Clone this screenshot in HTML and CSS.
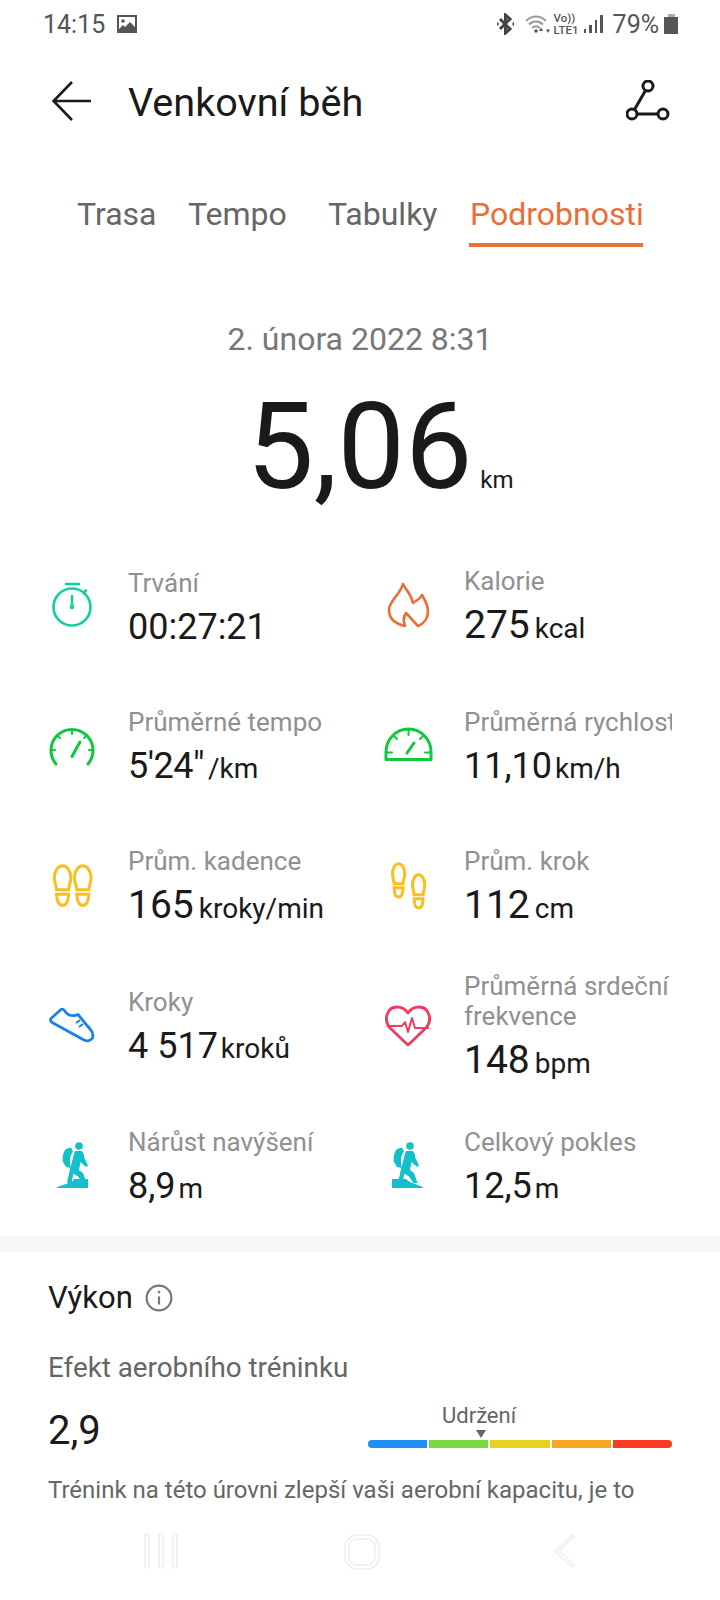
FILE: index.html
```html
<!DOCTYPE html>
<html lang="cs">
<head>
<meta charset="utf-8">
<title>Venkovní běh</title>
<link rel="stylesheet" href="styles.css">
</head>
<body>
<svg class="defs" width="0" height="0" aria-hidden="true">
  <defs>
    <path id="foot" d="M9 0C14 0 18 6 18 13C18 18 16 21 15.5 26H2.5C2 21 0 18 0 13C0 6 4 0 9 0ZM2.500 31H15.500C15.500 38 13 43 9 43C5 43 2.500 38 2.500 31Z"/>
    <g id="hiker">
      <circle cx="37" cy="10" r="3.8"/>
      <path d="M24 13L29 11.500L31 15.500C28 19 27 25 29 32L24 31L21 26C20 22 21 16 24 13Z"/>
      <path d="M33 15H39C41 15 42 18 42 21L46 29.500L44 31L38.500 26L37 34L41 37L44.500 47H40.500L36 40.500L31.500 37.500L29.500 47H25L28 33C30 27 31 20 33 15Z"/>
    </g>
  </defs>
</svg>

<div class="status">
  <div class="status-left">
    <span>14:15</span>
    <svg class="st-img" viewBox="0 0 20 18"><path class="fill-st" d="M0 0H20V18H0Z"/><path class="fill-w" d="M2 2H18V12L13 7L8 12L6 10L2 14Z"/><circle class="fill-st" cx="6" cy="6" r="1.8"/></svg>
  </div>
  <div class="status-right">
    <svg class="st-bt" viewBox="0 0 19 22"><path class="st-line" d="M4 6L14 16L9.5 20V2L14 6L4 16"/><path class="st-dot" d="M1 11H2.5M16.5 11H18"/></svg>
    <svg class="st-wifi" viewBox="0 0 26 20"><path class="st-wave" d="M1 7C7 1 15 1 21 7M4 10.5C8 6.500 14 6.500 18 10.500M7 14C9.500 12 12.500 12 15 14"/><circle class="fill-st" cx="11" cy="17" r="1.800"/><path class="fill-st" d="M16 13.500L18 17H14ZM23 19L21 15.500H25Z"/></svg>
    <div class="st-net"><span>Vo))</span><span>LTE1</span></div>
    <div class="st-bars"><i class="b1"></i><i class="b2"></i><i class="b3"></i><i class="b4"></i></div>
    <span class="st-pct">79%</span>
    <div class="st-batt"><i class="batt-cap"></i><i class="batt-body"></i></div>
  </div>
</div>

<header class="bar">
  <svg class="back" viewBox="0 0 40 40"><path d="M39 20H2M20 1L1.500 20L20 39"/></svg>
  <h1 class="title">Venkovní běh</h1>
  <svg class="route" viewBox="0 0 44 42"><circle cx="22" cy="6" r="5"/><circle cx="6" cy="34" r="5"/><circle cx="37" cy="34" r="5"/><path d="M19.500 10.500L8.500 29.500M11 34H32"/></svg>
</header>

<nav class="tabs">
  <span class="tab">Trasa</span>
  <span class="tab">Tempo</span>
  <span class="tab">Tabulky</span>
  <span class="tab active">Podrobnosti</span>
</nav>

<section class="summary">
  <div class="date">2. února 2022 8:31</div>
  <div class="distance"><span class="big">5,06</span><span class="km">km</span></div>
</section>

<section class="stats">
  <div class="stat">
    <svg class="ico" viewBox="0 0 60 60"><g class="s-green" transform="translate(0 1)"><circle cx="30" cy="30" r="18.500"/><path d="M24 7H37M30 19V30M41.500 16L44 13.500"/><circle cx="30" cy="30" r="1"/></g></svg>
    <div class="txt"><div class="lab">Trvání</div><div class="val">00:27:21</div></div>
  </div>
  <div class="stat">
    <svg class="ico" viewBox="0 0 60 60"><path class="s-orange" transform="translate(0 1)" d="M25 7C28 13 33 17 35 26C38 24 42 22 44 18C47 23 50 28 50 34C50 42 45 47 40 49C37 46 33 41 28 36C26 39 25 44 27 49C18 47 11 42 11 33C11 24 22 18 25 7Z"/></svg>
    <div class="txt"><div class="lab">Kalorie</div><div class="val"><span class="num">275</span><span class="unit wide">kcal</span></div></div>
  </div>

  <div class="stat">
    <svg class="ico" viewBox="0 0 60 60"><g class="s-lime" transform="translate(0 1)"><path d="M14 47A21 21 0 1 1 46 47"/><path class="thin" d="M30 13V17M15 18.500L18 21M45 18.500L42 21M9.500 33H13M50.500 33H47"/><path d="M30 39.500L38 25"/></g></svg>
    <div class="txt"><div class="lab">Průměrné tempo</div><div class="val"><span class="tight">5'24"</span><span class="unit gap">/km</span></div></div>
  </div>
  <div class="stat">
    <svg class="ico" viewBox="0 0 60 60"><g class="s-lime"><path d="M8 43.500H53V36A22.500 23 0 0 0 8 36Z"/><path class="thin" d="M30.500 14V19M16 20L19 23M45 20L42 23M9 36.500H14M52 36.500H47"/><path d="M29 37L36 27"/></g></svg>
    <div class="txt"><div class="lab clip">Průměrná rychlost</div><div class="val">11,10<span class="unit">km/h</span></div></div>
  </div>

  <div class="stat">
    <svg class="ico" viewBox="0 0 60 60"><g class="s-yellow"><use href="#foot" transform="translate(12.300 9.800) scale(.92 .92)"/><use href="#foot" transform="translate(32.500 9.800) scale(.92 .92)"/></g></svg>
    <div class="txt"><div class="lab">Prům. kadence</div><div class="val"><span class="num">165</span><span class="unit wide">kroky/min</span></div></div>
  </div>
  <div class="stat">
    <svg class="ico" viewBox="0 0 60 60"><g class="s-yellow"><use href="#foot" transform="translate(14.500 7.800) scale(.68 .77)"/><use href="#foot" transform="translate(34.500 18.800) scale(.68 .77)"/></g></svg>
    <div class="txt"><div class="lab">Prům. krok</div><div class="val"><span class="num">112</span><span class="unit wide">cm</span></div></div>
  </div>

  <div class="stat">
    <svg class="ico" viewBox="0 0 60 60"><g class="s-blue"><path d="M9 22.500L19 13.500Q21 12.500 22.500 14.500C24 18 29 21.500 36 18.500L48 33Q52 37 50.500 42Q47 46.500 42 44L11 27Q7.500 25 9 22.500Z"/><path class="thin" d="M34 27L38 24M37 31L41 28"/></g></svg>
    <div class="txt"><div class="lab">Kroky</div><div class="val">4 517<span class="unit">kroků</span></div></div>
  </div>
  <div class="stat">
    <svg class="ico" viewBox="0 0 60 60"><g class="s-red" transform="translate(0 1)"><path d="M30 48L12 31C5 23 9 10 19 10C24 10 28 13 30 16C32 13 36 10 41 10C51 10 55 23 48 31Z"/><path class="thin" d="M9 29H24L27 25L30 35L34 21L37 31H51"/></g></svg>
    <div class="txt"><div class="lab">Průměrná srdeční frekvence</div><div class="val"><span class="num">148</span><span class="unit wide">bpm</span></div></div>
  </div>

  <div class="stat">
    <svg class="ico" viewBox="0 0 60 60"><g class="f-teal"><use href="#hiker"/><path d="M15 52V51L30 46L32 43H46V52Z"/></g></svg>
    <div class="txt"><div class="lab">Nárůst navýšení</div><div class="val">8,9<span class="unit">m</span></div></div>
  </div>
  <div class="stat">
    <svg class="ico" viewBox="0 0 60 60"><g class="f-teal"><use href="#hiker" x="-5"/><path d="M14 43H28L32 46L45 51V52H14Z"/></g></svg>
    <div class="txt"><div class="lab">Celkový pokles</div><div class="val">12,5<span class="unit">m</span></div></div>
  </div>
</section>

<div class="band"></div>

<section class="perf">
  <div class="perf-head">
    <h2 class="perf-title">Výkon</h2>
    <svg class="info" viewBox="0 0 26 26"><circle cx="13" cy="13" r="11.500"/><path d="M13 11.500V19"/><circle class="dot" cx="13" cy="7.500" r="1.300"/></svg>
  </div>
  <div class="perf-sub">Efekt aerobního tréninku</div>
  <div class="perf-row">
    <div class="perf-val">2,9</div>
    <div class="scale">
      <div class="scale-label">Udržení</div>
      <div class="scale-mark"></div>
      <div class="scale-bar"><i class="seg s1"></i><i class="seg s2"></i><i class="seg s3"></i><i class="seg s4"></i><i class="seg s5"></i></div>
    </div>
  </div>
  <p class="perf-desc">Trénink na této úrovni zlepší vaši aerobní kapacitu, je to</p>
</section>

<footer class="nav">
  <svg class="nav-recent" viewBox="0 0 34 36"><rect x="1" y="1" width="4" height="34" rx="2"/><rect x="15" y="1" width="4" height="34" rx="2"/><rect x="29" y="1" width="4" height="34" rx="2"/></svg>
  <svg class="nav-home" viewBox="0 0 38 38"><rect x="2" y="2" width="34" height="34" rx="12"/><rect x="6" y="6" width="26" height="26" rx="8"/></svg>
  <svg class="nav-back" viewBox="0 0 24 36"><path d="M20 2L3 18L20 34L22 32L7 18L22 4Z"/></svg>
</footer>
</body>
</html>
```
FILE: styles.css
```css
* { box-sizing: border-box; }
html, body { margin: 0; padding: 0; }
body {
  width: 720px;
  height: 1600px;
  overflow: hidden;
  background: #fff;
  font-family: Roboto, "Liberation Sans", sans-serif;
  color: #1a1a1a;
}
.defs { position: absolute; }

/* status bar */
.status {
  height: 48px;
  display: flex;
  justify-content: space-between;
  align-items: center;
  padding: 0 42px 0 43px;
  color: #555;
  font-size: 25px;
}
.status-left, .status-right { display: flex; align-items: center; }
.st-img { width: 20px; height: 18px; margin-left: 12px; }
.fill-st { fill: #555; }
.fill-w { fill: #fff; }
.st-bt { width: 19px; height: 22px; }
.st-line { fill: none; stroke: #444; stroke-width: 3; }
.st-dot { fill: none; stroke: #444; stroke-width: 3; }
.st-wifi { width: 26px; height: 20px; margin-left: 10px; }
.st-wave { fill: none; stroke: #999; stroke-width: 2; }
.st-net {
  display: flex; flex-direction: column; align-items: flex-start;
  font-size: 11.500px; line-height: 12px; width: 26px; margin-left: 3px; font-weight: 500;
}
.st-bars { display: flex; align-items: flex-end; gap: 3px; height: 18px; margin-left: 4px; }
.st-bars i { display: block; width: 2.500px; background: #555; }
.b1 { height: 4px; } .b2 { height: 8px; } .b3 { height: 13px; } .b4 { height: 18px; }
.st-pct { margin-left: 10px; }
.st-batt { display: flex; flex-direction: column; align-items: center; width: 14px; margin-left: 5px; }
.batt-cap { display: block; width: 7px; height: 3px; background: #aaa; }
.batt-body { display: block; width: 14px; height: 17px; background: #555; }

/* header */
.bar {
  height: 106px;
  display: flex;
  align-items: center;
  padding: 0 50px 0 52px;
}
.back { width: 40px; height: 40px; flex: none; fill: none; stroke: #1a1a1a; stroke-width: 2.600; }
.title { margin: 4px 0 0 36px; flex: 1; font-size: 39.600px; line-height: 48px; font-weight: 400; }
.route { width: 44px; height: 42px; flex: none; fill: none; stroke: #1a1a1a; stroke-width: 3; }

/* tabs */
.tabs {
  display: grid;
  grid-template-columns: 111px 140px 142px 173px;
  padding-left: 77px;
  height: 93px;
  padding-top: 31px;
}
.tab { font-size: 32px; line-height: 58px; color: #666; height: 62px; }
.tab.active { color: #e96e33; border-bottom: 4px solid #e8703a; margin-left: -1px; padding-left: 1px; }

/* summary */
.summary { display: flex; flex-direction: column; align-items: center; padding-top: 71px; height: 289px; }
.date { font-size: 32px; line-height: 42px; color: #777; }
.distance { display: flex; align-items: baseline; margin: 17px 0 0 40px; }
.big { font-size: 120px; line-height: 140px; color: #1a1a1a; }
.km { font-size: 24px; margin-left: 8px; }

/* stats grid */
.stats {
  display: grid;
  grid-template-columns: 336px 336px;
  grid-auto-rows: 140px;
  padding-left: 42px;
  height: 700px;
}
.stat { display: flex; align-items: center; }
.ico { width: 60px; height: 60px; flex: none; fill: none; }
.txt { margin: 6px 0 0 26px; width: 208px; }
.stat:nth-child(odd) .txt { width: 240px; }
.lab { font-size: 26px; line-height: 30px; color: #909090; overflow: hidden; }
.lab.clip { white-space: nowrap; }
.val { font-size: 36px; line-height: 46px; margin-top: 6px; color: #1a1a1a; white-space: nowrap; }
.num { font-size: 39px; }
.tight { letter-spacing: -0.500px; }
.unit { font-size: 28px; margin-left: 3px; }
.unit.wide { margin-left: 5px; }
.unit.gap { margin-left: 4px; }
.s-green { stroke: #14cf9d; stroke-width: 2.600; stroke-linecap: round; }
.s-orange { stroke: #ee6c33; stroke-width: 2.600; stroke-linejoin: round; }
.s-lime { stroke: #10c83c; stroke-width: 3; stroke-linecap: round; stroke-linejoin: round; }
.thin { stroke-width: 2; }
.s-yellow { stroke: #fbbd1f; stroke-width: 3; }
#foot { vector-effect: non-scaling-stroke; }
.s-blue { stroke: #1b80ee; stroke-width: 2.800; stroke-linejoin: round; }
.s-red { stroke: #ef3d5c; stroke-width: 2.800; stroke-linejoin: round; }
.f-teal { fill: #12bfca; }

/* band */
.band { height: 16px; background: #f6f6f6; }

/* performance */
.perf { padding: 0 48px; height: 258px; }
.perf-head { display: flex; align-items: center; padding-top: 26px; height: 66px; }
.perf-title { margin: 0; font-size: 31px; line-height: 40px; font-weight: 400; }
.info { width: 28px; height: 28px; margin-left: 12px; fill: none; stroke: #777; stroke-width: 2; }
.info .dot { fill: #777; stroke: none; }
.perf-sub { font-size: 27.800px; line-height: 36px; color: #666; margin-top: 32px; }
.perf-row { display: flex; justify-content: space-between; align-items: flex-start; }
.perf-val { font-size: 40px; line-height: 50px; margin-top: 20px; }
.scale { width: 304px; display: flex; flex-direction: column; padding-top: 17px; }
.scale-label { font-size: 22px; line-height: 26px; color: #666; margin-left: 74px; }
.scale-mark { width: 0; height: 0; margin: 1px 0 0 108px; border-left: 5px solid transparent; border-right: 5px solid transparent; border-top: 8px solid #666; }
.scale-bar { display: flex; gap: 2px; height: 8px; margin-top: 2px; }
.seg { display: block; flex: 1; }
.s1 { background: #1e8ff5; border-radius: 4px 0 0 4px; }
.s2 { background: #76d93f; }
.s3 { background: #e7d224; }
.s4 { background: #f6a623; }
.s5 { background: #fb3a22; border-radius: 0 4px 4px 0; }
.perf-desc { margin: 17px 0 0; font-size: 24px; line-height: 34px; color: #666; white-space: nowrap; }

/* navigation bar */
.nav {
  position: relative;
  height: 90px;
}
.nav svg { position: absolute; top: 23px; }
.nav-recent { left: 144px; width: 34px; height: 36px; fill: none; stroke: #eeeeee; stroke-width: 1.500; }
.nav-home { left: 343px; width: 38px; height: 38px; fill: none; stroke: #eeeeee; stroke-width: 1.500; }
.nav-back { left: 552px; width: 24px; height: 36px; fill: none; stroke: #eeeeee; stroke-width: 1.500; }
```
